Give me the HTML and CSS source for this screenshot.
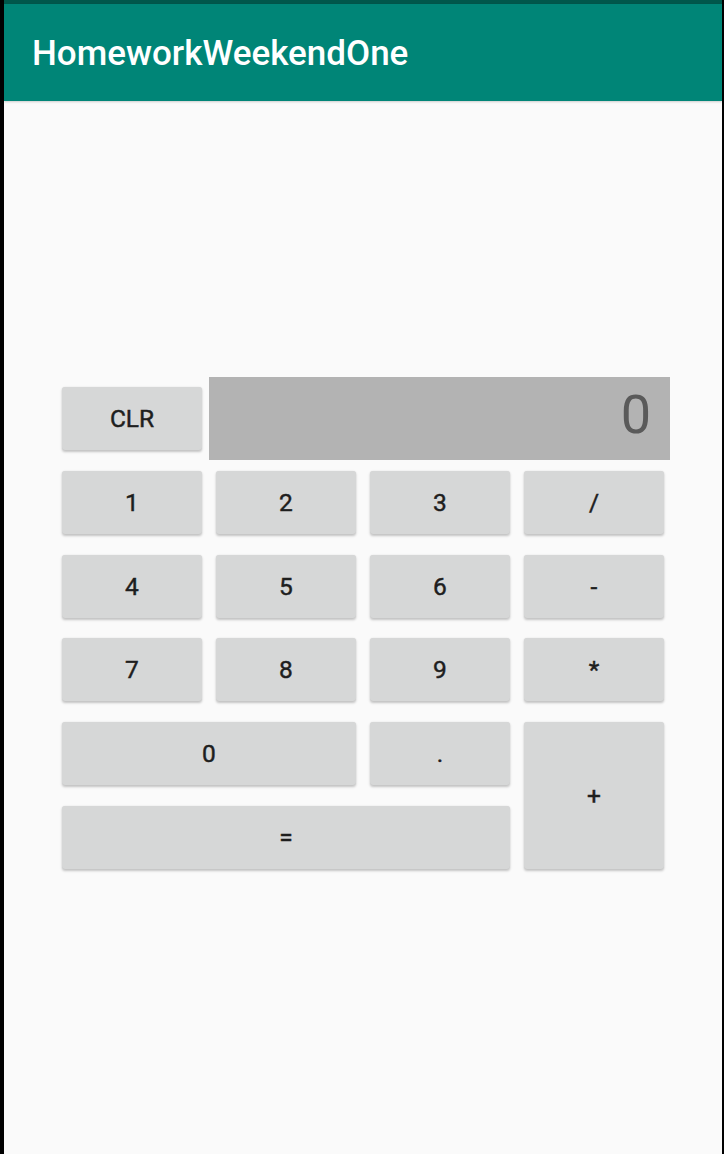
FILE: index.html
```html
<!DOCTYPE html>
<html>
<head>
<meta charset="utf-8">
<link rel="stylesheet" href="styles.css">
</head>
<body>
<div class="frame">
  <div class="statusbar"></div>
  <header class="appbar">
    <h1 class="title">HomeworkWeekendOne</h1>
  </header>
  <main class="content">
    <div class="calc">
      <button class="key">CLR</button>
      <div class="display"><span>0</span></div>
      <button class="key">1</button>
      <button class="key">2</button>
      <button class="key">3</button>
      <button class="key">/</button>
      <button class="key">4</button>
      <button class="key">5</button>
      <button class="key">6</button>
      <button class="key">-</button>
      <button class="key">7</button>
      <button class="key">8</button>
      <button class="key">9</button>
      <button class="key">*</button>
      <button class="key key-zero">0</button>
      <button class="key">.</button>
      <button class="key key-plus">+</button>
      <button class="key key-equals">=</button>
    </div>
  </main>
</div>
</body>
</html>
```
FILE: styles.css
```css
html, body {
  margin: 0;
  padding: 0;
  background: #000;
}
.frame {
  width: 718px;
  height: 1154px;
  margin-left: 4px;
  background: #fafafa;
  display: flex;
  flex-direction: column;
  font-family: Roboto, "Liberation Sans", sans-serif;
}
.statusbar {
  height: 4px;
  background: #00574b;
  flex: none;
}
.appbar {
  height: 97px;
  flex: none;
  background: #008577;
  display: flex;
  align-items: center;
  padding-left: 28px;
  box-shadow: 0 1px 2px rgba(0,0,0,0.18);
  position: relative;
  z-index: 1;
}
.title {
  margin: 0;
  color: #fff;
  font-size: 35px;
  font-weight: 500;
  letter-spacing: 0;
  line-height: 1;
  padding-top: 2px;
}
.content {
  padding-top: 276px;
  padding-left: 51px;
}
.calc {
  display: grid;
  grid-template-columns: repeat(4, 154px);
  grid-auto-rows: 83.75px;
}
.key {
  margin: 10px 7px 10.75px;
  border: none;
  border-radius: 3px;
  background: #d6d7d7;
  box-shadow: 0 1.5px 2.5px rgba(0,0,0,0.22), 0 0 1px rgba(0,0,0,0.08);
  color: #1e1e1e;
  font-family: Roboto, "Liberation Sans", sans-serif;
  font-size: 24.5px;
  font-weight: 400;
  -webkit-text-stroke: 0.45px #1e1e1e;
  padding: 0;
}
.display {
  grid-column: 2 / 5;
  height: 83px;
  width: 461px;
  background: #b3b3b3;
  display: flex;
  align-items: center;
  justify-content: flex-end;
  padding-right: 19px;
  box-sizing: border-box;
  color: #5a5a5a;
  font-size: 54px;
  font-weight: 400;
}
.display span {
  margin-top: -8px;
}
.key-zero {
  grid-column: 1 / 3;
}
.key-plus {
  grid-column: 4;
  grid-row: 5 / 7;
}
.key-equals {
  grid-column: 1 / 4;
}
```
